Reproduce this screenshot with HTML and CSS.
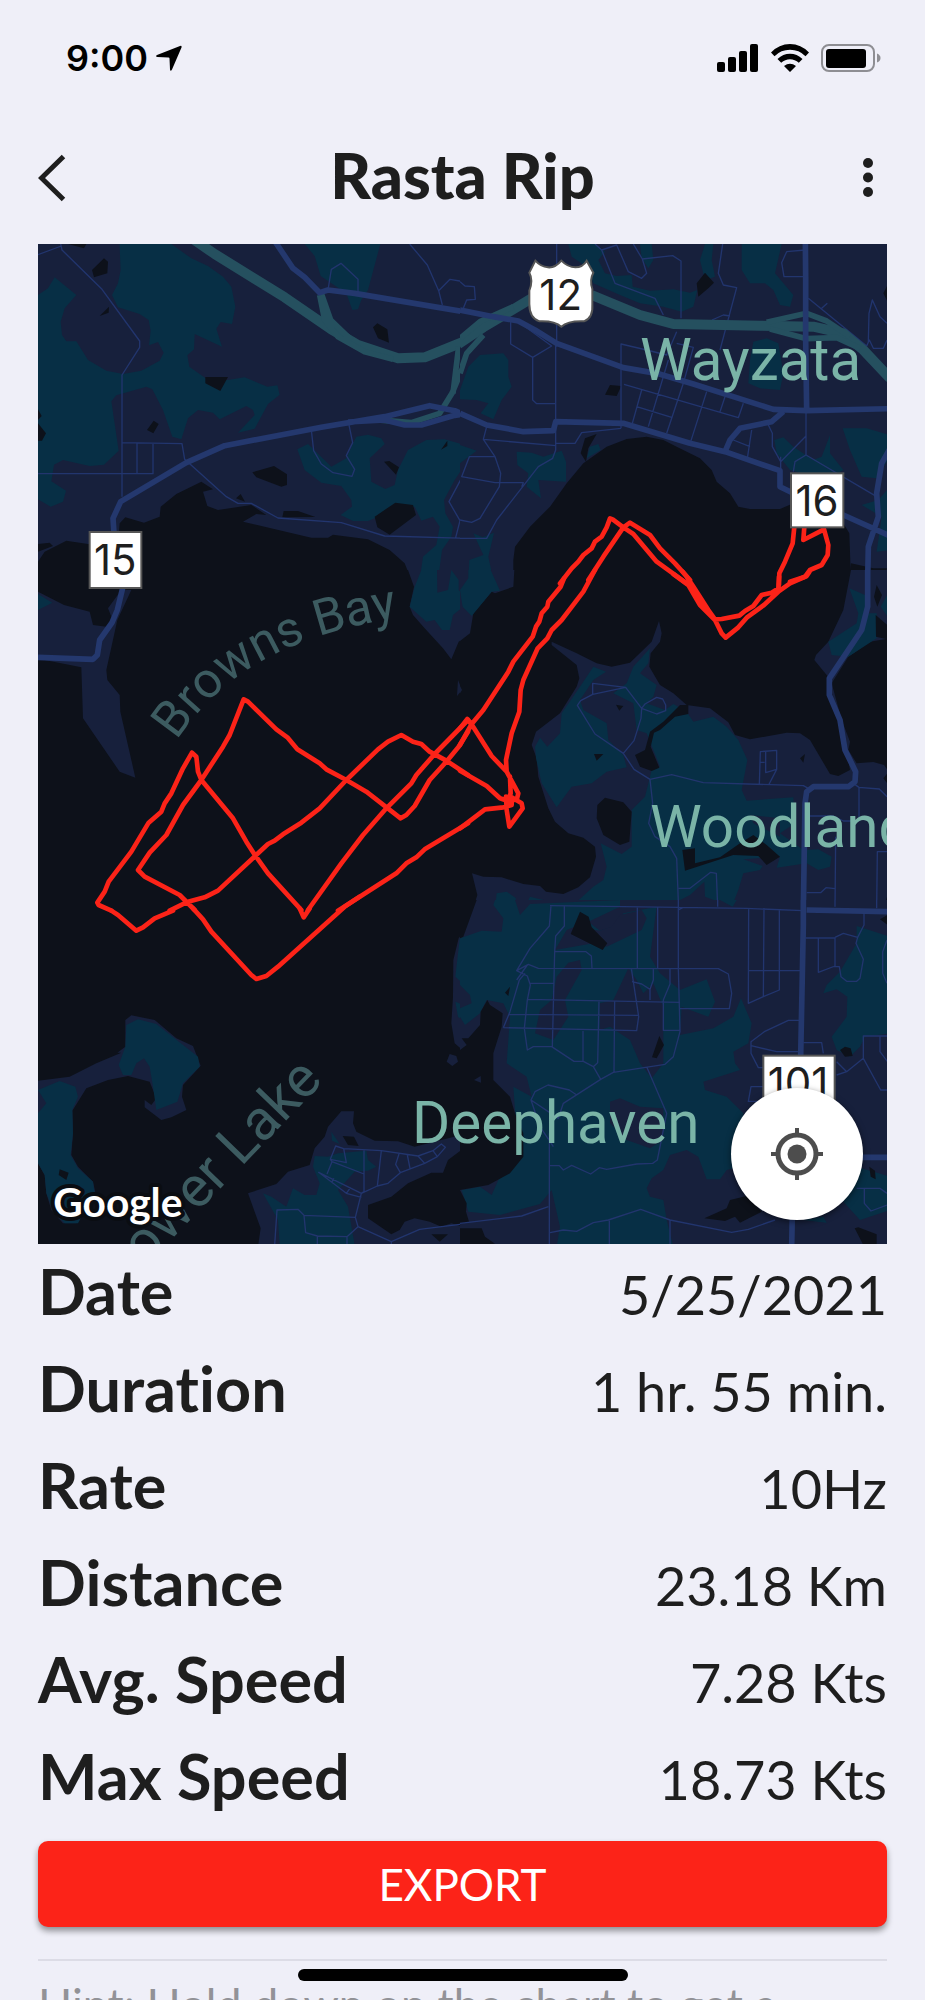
FILE: index.html
```html
<!DOCTYPE html>
<html lang="en">
<head>
<meta charset="utf-8">
<meta name="viewport" content="width=device-width, initial-scale=1">
<title>Rasta Rip</title>
<link rel="stylesheet" href="styles.css">
</head>
<body>
<div class="screen">
  <div class="status">
    <div class="status-side">
      <span class="clock">9:00</span>
      <svg class="icon-arrow" viewBox="0 0 26 26" aria-hidden="true"><path d="M24 1Q26 0 25.500 2.500L16 24.500Q14.500 27 14 24.500L13.500 13.500Q13.500 12.500 12.500 12.500L1.500 12Q-1 11.500 1 10Z"/></svg>
    </div>
    <div class="status-side">
      <svg class="icon-signal" viewBox="0 0 42 28" aria-hidden="true"><rect x="0" y="18" width="8" height="10" rx="2"/><rect x="11" y="13" width="8" height="15" rx="2"/><rect x="22" y="7" width="8" height="21" rx="2"/><rect x="33" y="0" width="8" height="28" rx="2"/></svg>
      <svg class="icon-wifi" viewBox="0 0 38 28" aria-hidden="true"><path d="M0 8.500Q8 0 19 0T38 8.500L34.500 12.200Q28 5.800 19 5.800T3.500 12.200ZM6.500 15Q12 9.700 19 9.700T31.500 15L27.800 18.800Q24 15.300 19 15.300T10.200 18.800ZM13 22Q19 17.500 25 22L19 28Z"/></svg>
      <svg class="icon-battery" viewBox="0 0 60 28" aria-hidden="true"><rect class="battery-shell" x="1" y="1" width="52" height="26" rx="7"/><rect x="5" y="5" width="40" height="19" rx="3"/><path class="battery-tip" d="M56 9.500Q59.500 11 59.500 14T56 18.500Z"/></svg>
    </div>
  </div>

  <header class="topbar">
    <button class="icon-button" type="button" aria-label="Back"><svg class="icon-back" viewBox="0 0 28 48" aria-hidden="true"><path d="M25.500 2.500L3.500 24L25.500 45.500"/></svg></button>
    <h1 class="title">Rasta Rip</h1>
    <button class="icon-button icon-button-end" type="button" aria-label="More"><svg class="icon-more" viewBox="0 0 10 40" aria-hidden="true"><circle cx="5" cy="5" r="5"/><circle cx="5" cy="19.500" r="5"/><circle cx="5" cy="34" r="5"/></svg></button>
  </header>

  <main class="content">
    <div class="map">
      <svg class="map-canvas" viewBox="0 0 2547 3000" role="img" aria-label="Map of the route">
        <rect class="land" width="2547" height="3000"/>

        <svg x="0" y="-12" width="1290" height="1020">
          <g class="park">
            <path d="M0 165L30 145 50 112 115 165 80 205 68 245 72 285 85 304 115 304 150 360 205 392 255 402 310 392 365 362 377 338 360 306 333 316 338 272 332 240 305 222 240 202 222 165 240 130 248 90 244 0 390 0 400 12 460 55 510 78 555 110 580 140 592 200 582 252 548 246 535 266 552 320 470 282 468 328 448 346 454 380 505 416 570 420 620 412 688 440 718 436 725 464 690 492 650 566 600 578 650 525 645 510 625 498 545 538 525 518 480 510 450 535 430 598 403 590 375 510 343 448 325 440 235 466 220 484 242 632 198 674 155 678 75 660 48 674 40 724 84 752 75 785 38 800 0 778Z"/>
            <path d="M800 12H1027L990 150 970 180 960 208 943 210 925 160 848 108 830 48Z"/>
            <path d="M778 628L810 612 880 680 925 655 945 610 955 590 990 584 1030 595 1040 612 995 655 1000 725 1042 747 1070 735 1080 690 1110 630 1165 600 1220 598 1290 618V660L1250 720 1218 780 1222 820 1245 860 1240 890 1212 930 1200 1020H1145L1155 950 1195 915 1205 860 1185 830 1150 842 1130 800 1010 835 990 843 945 843 908 825 942 800 940 780 910 738 850 728 800 690Z"/>
            <path d="M1266 478L1290 410V478ZM1240 990L1270 1020H1235Z"/>
          </g>
          <g class="water">
            <path d="M0 965L20 935 85 902 150 912 240 905 245 850 262 832 318 848 365 830 368 800 415 762 490 725 525 748 495 755 508 798 540 810 640 795 685 825 655 822 615 845 820 893 870 893 885 884 990 898 1055 930 1100 970 1120 1020H0Z"/>
            <path d="M0 912L35 908 45 918 0 935ZM90 12H145L138 25ZM162 90L198 55 210 65 208 100 168 112ZM185 228L213 200 212 218ZM1005 262L1018 250 1048 268 1053 308 1020 295ZM502 411H570L547 453 502 430ZM327 570L347 542 362 552 346 580ZM0 508L11 528 0 540ZM0 550L24 580 12 602H0ZM643 697L708 678 747 703V735L730 740 655 712ZM594 775L608 762 621 785ZM737 813H780L832 831 733 832ZM1010 830L1072 788 1125 795 1134 825 1055 884 1018 862ZM1038 665L1054 663 1083 682 1074 704ZM1209 629L1228 602V618Z"/>
          </g>
          <g class="street">
            <path d="M0 44L70 18M68 12L72 30 192 148 305 303V322L252 405V770M0 701H345V610M297 610V701M252 608L432 611 440 658 565 770 600 790H640L720 834 910 848 1040 888 1290 895M820 570L827 632 850 672 885 698 942 709 950 688 925 647 944 608 933 555M870 150L880 88 909 70 960 118V155M1115 12L1168 75 1202 152 1213 195M1202 152L1236 118 1265 123 1290 140M1279 210L1290 175M1290 655L1273 710 1233 785 1266 842 1253 893M1273 710L1290 713M1266 842L1290 845"/>
          </g>
          <g class="highway">
            <path d="M455 -10L530 42 740 172 880 268 960 315 1080 355 1160 352 1290 300"/>
            <path class="ramp" d="M845 165L860 240 900 290 980 335 1065 358M850 160L878 240 940 300M1290 345L1242 460 1205 520 1120 548 1000 538M1262 320L1245 460"/>
          </g>
          <g class="road"><path d="M708 0L765 85 800 112 845 158 870 150 950 160 1290 217M228 880L225 835 248 785 445 668 560 617 850 562 1040 530 1175 497 1250 512 1290 530M930 546L1040 540 1100 555H1150L1250 526 1290 520"/></g>
        </svg>

        <svg x="1266" y="-12" width="1290" height="1020">
          <rect class="land" width="1290" height="1020"/>
          <g class="park">
            <path d="M325 12H405L435 35 415 60 435 100 470 108 515 105 518 140 570 152 640 148 690 158 712 150 700 200 665 215 610 200 540 190 480 165 400 130 380 80 335 50ZM540 12H575L580 60 565 85 545 55ZM735 12H760L755 60 765 110 735 120 720 60ZM845 12H965L945 100 1000 165 990 200 960 195 940 150 915 130 870 130 845 90ZM60 345L130 340 145 360V410L155 440 125 480 100 538 62 520 85 490 50 480 0 478V450L25 380ZM880 305L920 295 955 310 970 400 960 450 900 445 865 430 870 360ZM170 635L215 638 250 650 305 632 318 665V725L235 720 243 775 200 740 205 700 172 675ZM1148 565L1220 565 1290 585V650L1250 715 1205 710 1170 630ZM943 600L970 592 1000 620 1060 660 1085 650 1110 585V640L1150 690 1100 720 990 690 950 640ZM0 615L50 632 0 670ZM40 880L68 892 102 878 85 950 100 1020H25L28 960 70 945ZM390 620L415 612 422 630 380 655ZM1205 795L1255 780 1290 740V930L1250 935 1265 830Z"/>
          </g>
          <g class="water">
            <path d="M160 960L165 920 210 860 270 800 320 730 370 670 440 620 500 597 560 590 610 600 650 620 720 655 755 690 770 725 810 760 835 800 870 807 960 807 1000 790 1150 850 1168 880 1173 1020H160Z"/>
            <path d="M735 98L762 128 745 145 715 170 710 130ZM450 435L484 438 470 468 435 464ZM1290 120L1270 160 1290 200ZM375 595L410 582 385 625 378 665 362 640ZM1173 970L1240 985 1281 985 1275 1008 1240 990H1170Z"/>
          </g>
          <g class="street">
            <path d="M290 12V320M287 310V630L278 655 235 680 110 840 80 895H0M152 245V312L218 352 275 318 175 245M218 352V480L230 491H285M425 30L470 15 505 95 545 115 560 100 547 57 520 12M405 12L425 30 465 130 585 175 610 225M547 57L638 47 663 63V235M788 12L775 100 790 135 830 143 780 330M1035 30L980 35 965 68 972 110H1036M756 240L790 225 810 228M483 565V312L560 330 620 345 650 275M650 310L700 322 670 430 620 580M492 433L835 533 850 490M545 450L517 550M625 360L565 560M740 455L692 605M530 500L635 532M795 470L780 515M1045 175L1220 318 1228 300 1240 325 1270 325 1281 300M1225 305L1227 220 1237 180 1260 230 1281 250M1085 205L1102 190M80 560L70 598 288 617M70 598L105 650 122 700 118 740 60 835 35 847 0 840M105 650H28L5 710 105 728H190L185 740M483 565L365 578 345 610H287M875 570L862 655M820 600L870 620M925 555L937 580V620L962 665 1038 588V510M1038 588V645L1250 770M1000 695L1005 665 1038 645M962 650V690M0 125L15 138 43 140 46 178 20 180 10 205"/>
          </g>
          <g class="highway">
            <path d="M-5 312L70 262 215 175M395 165L540 225 640 252 900 257 1060 260 1150 280 1210 330 1290 415"/>
            <path class="ramp" d="M0 295L60 245 160 200M0 400L20 340 70 285M920 247L1040 220 1100 243 1170 290M930 267L1040 296 1130 293 1200 325"/>
          </g>
          <g class="road"><path d="M1036 0L1037 110V300L1040 510M0 210L100 230 175 243 225 270 290 310 490 383 590 400 700 432 940 508 1040 512 1290 506M970 515L935 545 840 565 810 600 795 635M0 520L80 555 190 575 280 572 287 545 490 550 690 610 795 635 960 692V740L1000 760 1150 825 1290 888M1290 625L1265 670 1250 760 1255 830 1225 920 1223 1020"/></g>
        </svg>

        <svg x="0" y="978" width="1290" height="1020">
          <rect class="water" width="1290" height="1020"/>
          <path class="land" d="M0 65L78 105 155 125 165 165 205 170 222 145 210 115 250 60H280L238 150 205 300 208 330 245 375 247 425 292 623 245 605 135 445 130 292 20 270H0ZM1110 0H1290V195L1262 215 1240 268 1215 235 1160 175 1125 135 1115 110 1128 50ZM1260 330L1272 360 1257 378Z"/>
          <path class="park" d="M0 72L43 98 0 120ZM1150 0H1197L1198 68 1230 60 1240 0 1262 30V60L1275 75 1290 40V130L1270 115 1245 135 1235 180 1212 180 1190 150 1165 155 1115 110 1130 50Z"/>
          <path class="road" d="M255 50L238 120 222 158 185 210 178 255 165 268 0 262"/>
        </svg>

        <svg x="1266" y="978" width="1290" height="1020">
          <rect class="water" width="1290" height="1020"/>
          <path class="land" d="M0 0H163L160 50 105 70 95 65 40 130 30 190 0 213ZM275 215L350 250 410 280 455 290 510 278 575 215 597 153 605 190 600 215 572 250 568 290 600 345 640 370 680 405 750 415 805 457 825 495 870 508 980 488 1020 490 1050 510 1110 612 1135 618 1170 600 1160 545 1125 420 1108 325 1063 270 1068 255 1105 215 1150 120 1173 0H1290V205L1230 215 1165 260 1115 340 1145 450 1170 515 1165 540 1190 580 1240 576 1272 585 1290 610V1020H38L52 975 36 910 70 920 125 922 190 942 240 948 258 965 310 972 355 952 390 922 408 860 405 830 370 803 325 790 285 755 265 715 235 620 230 565 215 525 228 485 300 430 350 350 358 325 350 285 275 225ZM0 348L6 360 0 370Z"/>
          <g class="park">
            <path d="M25 0H92L120 62 95 65 35 138 8 110 0 60 25 25ZM400 290L438 305 400 330 360 390 370 420 440 460 445 510 490 555 500 592 440 605 395 640 335 650 290 712 245 640 228 565 225 530 240 503 262 530 300 490 305 430 360 350ZM570 235L565 280 540 310 590 345 580 380 560 400 615 420 640 402 680 425 700 455 760 440 800 470 835 510 862 570 845 660 860 692 1000 682 1005 760 960 790 1030 840 1075 838 1115 860 1110 890 1075 900 1040 880 950 893 960 860 850 868 908 888 900 900 850 910 835 960 815 1010 735 980 733 935 690 975 620 1010 340 1005 400 950 430 930 440 890 422 820 485 852 515 830V720L555 680 575 600 600 590 560 490 530 480 520 400 460 370 500 340 520 290ZM1168 55L1215 75V130L1250 130V205L1165 260 1115 255 1105 215 1190 160 1195 130ZM1290 60L1262 110 1290 150ZM110 970L140 965 168 985 160 1020H105ZM210 980L290 1000 300 1020H190Z"/>
          </g>
          <path class="land" d="M870 735L960 745V800L880 760Z"/>
          <g class="water">
            <path d="M435 683L490 697 515 725 508 815 480 825 430 795 410 745 412 705ZM660 405L685 405V432L645 440 600 480 582 488 572 530 598 593 575 603 540 590 525 555 555 540 570 485 610 455ZM667 840L705 835V880L780 862 840 820 880 795 920 825 960 860 920 885 895 858 820 855 675 902ZM468 404L490 408 478 422ZM402 552H430L410 572ZM1035 552L1030 578 1020 565ZM1250 45L1266 75 1252 110 1242 80ZM1247 135L1290 172V210L1248 200ZM1290 600L1270 625 1290 650ZM1281 980L1270 1020H1290Z"/>
          </g>
          <g class="street">
            <path d="M398 373V340L497 352 545 415 543 445 522 512 490 550 405 492 352 406 362 392 398 373 497 352M545 415L555 402 590 382 608 387 617 405V422L590 432 545 415M490 550L522 598 570 628 635 614 730 638 1030 647 1045 655M570 628L578 700 566 760 585 800 630 830 650 865 656 1020M656 955H690L752 907 769 910 773 1010M273 1020V1006L655 1010 1290 1022M313 1006V1020M532 1010V1020M593 1010V1020M898 645L901 545 950 541V598L926 645M950 598L917 608V545M901 577H914M1180 640L1197 652 1258 657 1281 680M1197 652V753M1040 738H1120L1150 753H1197M1040 968H1082L1098 953 1125 956M1125 1015L1127 800M1281 845H1252L1250 1015"/>
          </g>
          <path class="road" d="M1223 0V110L1205 180 1108 325V375L1140 450 1155 540 1187 605 1185 635 1165 650H1060L1040 665 1035 700 1030 1020"/>
        </svg>

        <svg x="0" y="1968" width="1290" height="1040">
          <rect class="water" width="1290" height="1040"/>
          <path class="land" d="M0 542L95 530 175 490 250 458 238 458 262 440V360L280 346 350 360 415 415 465 438 488 497 435 555 432 590 445 630 400 652 370 660 320 622V600L340 615 355 595 335 545 270 528 210 540 145 565 103 632 105 700 100 765 120 800 165 845 175 890 115 970H75L40 930 25 880 20 825 0 790ZM910 634H948L945 670 955 695 1010 722 1080 724 1130 740 1290 700V735L1230 780 1215 818H1180L1110 850 1060 890 990 915V955L1060 1003 1085 990 1100 965 1130 955 1175 965 1210 980 1240 970 1290 985V1040H660L668 985 630 880 715 852 750 815 815 795 830 745 860 710 870 680ZM1290 80L1262 115 1246 180 1245 290 1240 370 1250 430 1270 447 1285 440 1270 420 1290 420ZM1235 462L1255 468 1260 485 1243 498 1226 485Z"/>
          <path class="park" d="M265 375L300 358 355 372 480 470 485 500 435 550 418 605 355 630 345 560 335 500 318 475 295 490 280 525 255 525 242 495 262 440ZM0 570L65 543 112 560 120 590 103 630 105 700 98 765 120 805 165 845 170 880 120 970H80L45 930 25 880 20 825 0 790V640L25 610ZM830 768L870 770 900 760 985 752 990 780 1015 800 990 812 950 815 900 870 930 920 950 1035H725L720 960 675 880 700 890 745 920 765 865 800 885 835 885 845 850 825 800ZM880 695L905 732 882 722ZM1265 118L1290 120V265L1252 230ZM1252 305L1290 320V375L1260 350ZM1275 870H1290V910Z"/>
          <path class="water" d="M65 808L92 818 85 840 62 825ZM914 708L948 710 962 738 930 735ZM1180 1003L1230 1003 1205 1025Z"/>
          <path class="street" d="M710 1035L717 930 780 928 798 946 952 952M798 946L803 998 838 1008 927 1010 960 980 1060 1025 1145 988 1290 970M838 1008V1035M927 1010V1035M960 980L952 952 970 880 1018 858 1050 850 1087 818 1160 790 1198 770 1222 742 1210 732 1185 752 1140 768 1030 752 917 746 893 738 877 778 925 788 917 746M877 778L882 785 867 822M882 785L978 822V750M978 822V875L970 880 842 817 925 880 970 892M880 848L888 835M925 880L938 862M1030 752L1018 858M1083 762L1073 793 1087 818M1108 765L1116 805M1140 768L1160 790M1185 752L1198 770M1060 1025V1035"/>
        </svg>

        <svg x="1266" y="1968" width="1290" height="1040">
          <rect class="land" width="1290" height="1040"/>
          <g class="park">
            <path d="M0 115L65 92 125 95 130 55 100 15 105 0H165L180 45 210 12 480 0 480 20 385 65 420 92 460 80 490 40 590 20 570 170 600 220 660 270 740 238 765 305 745 350 690 330 665 320 660 405 760 385 820 350 843 295 875 370 865 430 820 455 825 490 840 510 730 545 735 570 800 590 850 640 840 800 800 810 780 838H740L715 770 680 750 630 765 610 810 575 835 560 865 570 890 610 900 620 960 640 1040H290L300 980 275 870 240 912 120 945 25 935 5 870 60 860 95 885 115 840 190 760 170 700 160 560 215 590 200 530 140 490 150 350 130 310 80 300 60 340 15 375 0 350ZM1190 78L1290 110V400L1215 410 1200 440 1170 470 1130 450 1115 410 1160 350 1162 290 1130 268 1090 280 1100 255 1140 215 1190 130ZM1150 905L1190 800 1290 830V930L1200 960ZM1030 960L1090 950 1100 968ZM780 0H830L818 20Z"/>
          </g>
          <path class="land" d="M325 188L360 180 365 210 315 300 325 350 280 420 225 400 240 330 275 300 290 230ZM505 205L530 240 550 280 580 250 610 320 610 490 575 535 540 490 510 420 450 380 420 390 420 310 460 300ZM0 255L30 285 35 310 0 325ZM450 605L480 595 540 620 610 625V720L570 745 500 720 450 670ZM480 45L545 30 560 55 545 90 440 140 400 130 285 150 320 90 345 80 420 92 455 80Z"/>
          <g class="water">
            <path d="M82 300L90 315 128 340 125 380 100 460V540L150 590 165 640 190 700V770L150 820 85 855 0 870V450L20 435 5 415 25 415 60 375 62 335ZM0 0H50L10 110 0 115ZM0 870L20 910 18 935 28 968 0 970ZM0 985H65L75 1010 105 1031 0 1040ZM360 35L386 50 395 82 442 130 428 150 332 102ZM135 278L150 260 145 288ZM598 408L612 435 590 475 576 472ZM733 955L800 925 810 900 860 888 905 935 840 968 825 950 795 963ZM1140 450L1155 440 1172 445 1178 468 1155 470ZM1228 800L1245 812 1247 838 1232 830ZM1184 985L1195 982 1250 1003V1035H1210ZM1290 40L1260 58 1290 80Z"/>
            <path class="land" d="M42 540L62 528 63 548Z"/>
          </g>
          <g class="street">
            <path d="M655 0V205L660 395 640 470 615 493 460 517 422 538 310 610 300 640M655 30L670 22M773 0V20M270 17L655 22 860 25 1030 32M273 17L268 78 210 145 170 212 202 228 211 255 202 300 193 385 202 450 220 440H275L342 484H370L400 500 422 538M313 17V78L287 108 284 155 277 440M285 155H378L394 168 396 205M532 20V205M593 22V205M170 212L205 193 235 205 775 206 805 222 815 280 808 326H660M170 240L202 195M130 383L150 335 178 240 195 220M211 250H282M202 298L660 307M148 343L535 346M130 383L530 392 536 350 514 205M516 245L545 252 570 268 580 240 580 205M570 268V300M630 205V252L610 300V391H660M417 302L413 488 400 500M464 302L462 517M369 393V484M560 500L620 640 592 780 578 790 530 792 440 808 418 803 392 822 335 796 310 810 298 797H270M350 585L328 570 264 555 225 575 213 600 295 655 300 640M213 600L240 680 280 740M268 1040V700M0 970L185 948 265 920M270 998L310 990 350 994 400 968 445 960 542 928 630 960 815 997 865 988 945 960M448 962V1035M630 960V1035M866 25L865 310 910 290 958 270V30M912 25L910 290M865 212H1020M1036 114H1125V198L1075 217V115M1125 112L1150 100 1193 112 1188 130 1210 178 1200 235 1190 244H1160L1143 230 1138 200H1120M1193 112L1212 75V42M1125 0V20M1250 0V25M1281 120L1268 155V220L1281 250M1017 361H985L913 395 873 425V460L895 503H910M873 437L950 455 1015 455M1030 428H1085L1090 460M1130 485L1160 515 1210 475V408H1290M1160 515L1130 525M1210 475L1262 570H1290M1260 408V455L1290 495M910 560H873L865 604H910M1190 865H1260L1281 880M1213 867V910L1233 933 1281 915"/>
          </g>
          <path class="road" d="M1030 0V75L1022 470M997 940L995 1040M1040 30L1290 35M1190 772H1290"/>
        </svg>

        <defs>
          <path id="bay-arc" d="M416 1490C525 1325 710 1168 1130 1114"/>
        </defs>
        <text class="water-label bay"><textPath href="#bay-arc">Browns Bay</textPath></text>
        <text class="water-label" text-anchor="end" transform="translate(858 2512) rotate(-46)">Lower Lake</text>

        <g class="route">
          <path transform="translate(1266 -12)" d="M300 1030L335 985 355 965 370 945 395 925 405 905 425 890 440 862 450 835 458 838 490 862 520 882 590 965 680 1030M385 1020L430 950 490 862 510 848 570 885 600 925 645 970 690 1020M1003 860L998 910 975 965 958 1000 957 1035M1033 860L1030 900 1092 868 1105 915 1103 945 1085 975 1050 990 1035 1010 990 1025"/>
          <path transform="translate(1266 978)" d="M312 25L302 50 265 95 262 110 245 130 238 155 228 170 218 200 160 275 145 305 70 420 35 462 0 525M405 0L370 65 305 150 275 180 262 205 233 235 190 330 182 360 178 425 155 490 138 570 140 605 175 670 170 690 135 690 120 685 80 648 0 602M0 475L22 447 38 468 95 558 140 605M138 680L140 720 148 770 188 715 185 700 155 682 155 705 130 712 75 718 0 775M150 620L152 670 140 700M640 12L685 45 720 105 765 150 785 190 797 203 835 172 860 143 912 105 955 65 990 40 1040 18 1048 6M668 5L680 20 700 50 745 120 765 148 785 147 838 137 855 123 880 108 905 75 935 68 955 55 957 20"/>
          <path transform="translate(0 978)" d="M462 548L475 560 480 605 490 630 585 745 625 815 652 857 690 910 790 1020M462 548L435 595 400 670 380 700 370 725 332 758 280 845 212 935 200 965 178 998 182 1005 220 1022M617 388L630 395 715 478 748 502 778 538 845 580 865 598 925 630 985 665 1088 745 1105 735 1130 708 1175 630 1225 575 1262 530 1290 485M617 388L575 495 555 530 490 630 435 705 385 795 335 848 300 900 320 920 425 975 470 1020M395 1022L450 995 500 982 540 962 690 822 710 812 735 793 790 758 845 715 925 630 1020 538 1050 515 1090 495 1125 515 1150 522 1175 545 1225 572 1290 615M810 1020L910 880 975 795 1045 715 1120 640 1135 615 1190 552 1290 450M900 1022L1075 910 1105 880 1135 862 1160 838 1290 760"/>
          <path transform="translate(0 1968)" d="M220 32L240 45 295 92 315 82 350 55 405 32M465 25L495 58 520 95 640 225 655 237 685 228 720 200 920 20 965 -10M785 25L797 52 815 25"/>
        </g>

        <g class="place-label">
          <text x="1806" y="408">Wayzata</text>
          <text x="1836" y="1808">Woodland</text>
          <text x="1122" y="2697">Deephaven</text>
        </g>
        <g class="shield">
          <path d="M1492 50Q1508 68 1530 70T1570 50Q1590 70 1612 70T1646 50L1666 86Q1654 108 1663 135V180Q1666 222 1638 232Q1590 230 1570 248Q1550 230 1504 232Q1474 222 1474 180V140Q1486 108 1474 86Z"/>
          <rect x="155" y="864" width="155" height="168"/>
          <rect x="2259" y="688" width="157" height="162"/>
          <rect x="2176" y="2435" width="214" height="176"/>
        </g>
        <g class="shield-text">
          <text x="1568" y="198">12</text>
          <text x="232" y="992">15</text>
          <text x="2337" y="815">16</text>
          <text x="2280" y="2562">101</text>
        </g>
        <text class="brand" x="46" y="2918">Google</text>
      </svg>
      <button class="locate" type="button" aria-label="Center on my location">
        <svg class="icon-locate" viewBox="0 0 52 52" aria-hidden="true"><circle class="locate-ring" cx="26" cy="26" r="19"/><circle cx="26" cy="26" r="9.500"/><path d="M24 0H28V8H24ZM24 44H28V52H24ZM0 24H8V28H0ZM44 24H52V28H44Z"/></svg>
      </button>
    </div>

    <dl class="stats">
      <div class="row"><dt>Date</dt><dd>5/25/2021</dd></div>
      <div class="row"><dt>Duration</dt><dd>1 hr. 55 min.</dd></div>
      <div class="row"><dt>Rate</dt><dd>10Hz</dd></div>
      <div class="row"><dt>Distance</dt><dd>23.18 Km</dd></div>
      <div class="row"><dt>Avg. Speed</dt><dd>7.28 Kts</dd></div>
      <div class="row"><dt>Max Speed</dt><dd>18.73 Kts</dd></div>
    </dl>

    <button class="export" type="button">EXPORT</button>
    <p class="hint">Hint: Hold down on the chart to get a</p>
  </main>
  <div class="home-indicator"></div>
</div>
</body>
</html>
```

FILE: styles.css
```css
* { box-sizing: border-box; }

body {
  margin: 0;
  background: #efeff8;
  color: #1e1e1e;
  font-family: Lato, "Open Sans", sans-serif;
  font-variant-ligatures: none;
}

button {
  border: 0;
  padding: 0;
  color: inherit;
  font: inherit;
  cursor: pointer;
}

.screen {
  position: relative;
  height: 100vh;
  overflow: hidden;
}

.status {
  display: flex;
  justify-content: space-between;
  align-items: center;
  height: 116px;
  padding: 0 44px 0 66px;
  color: #000;
}

.status-side {
  display: flex;
  align-items: center;
  gap: 12px;
}

.clock {
  font: 600 36px/1 Inter, sans-serif;
}

.status svg { fill: currentColor; }
.icon-arrow { width: 26px; height: 26px; margin-left: -4px; }
.icon-signal { width: 42px; height: 28px; }
.icon-wifi { width: 38px; height: 28px; }
.icon-battery { width: 60px; height: 28px; }
.icon-battery .battery-shell { fill: none; stroke: #8e8e93; stroke-width: 2; }
.icon-battery .battery-tip { fill: #8e8e93; }

.topbar {
  display: flex;
  align-items: center;
  justify-content: space-between;
  height: 128px;
  padding: 0 38px 4px;
}

.title {
  margin: 0;
  padding-bottom: 6px;
  font-size: 63px;
  line-height: 72px;
  font-weight: 900;
}

.icon-button {
  display: flex;
  width: 56px;
  height: 56px;
  align-items: center;
  background: none;
}

.icon-button-end {
  justify-content: flex-end;
  padding-right: 14px;
}

.icon-back {
  width: 28px;
  height: 48px;
  fill: none;
  stroke: currentColor;
  stroke-width: 5;
}

.icon-more { width: 10px; height: 40px; fill: currentColor; }

.content { padding: 0 38px; }

.map { position: relative; }

.map-canvas {
  display: block;
  width: 100%;
  height: auto;
  overflow: hidden;
}

.land { fill: #17203c; }
.water { fill: #0d111a; }
.park { fill: #072f45; }

.street,
.road,
.highway,
.route {
  fill: none;
  stroke-linejoin: round;
}

.street { stroke: #22356e; stroke-width: 4; }
.road { stroke: #24386e; stroke-width: 17; }
.highway { stroke: #25505f; stroke-width: 30; }
.ramp { stroke-width: 17; }
.route { stroke: #fc2318; stroke-width: 14; stroke-linecap: round; }

.place-label { fill: #7ab4a7; font: 400 175px Roboto, sans-serif; }
.water-label { fill: #3c5b60; font: 400 170px Roboto, sans-serif; }
.bay { font-size: 150px; }

.shield { fill: #fff; stroke: #565656; stroke-width: 6; }
.shield-text {
  fill: #1e1e1e;
  font: 400 126px Inter, sans-serif;
  text-anchor: middle;
}

.brand {
  fill: #fff;
  stroke: #0a0d12;
  stroke-width: 24;
  stroke-linejoin: round;
  paint-order: stroke;
  font: 700 122px Lato, sans-serif;
}

.locate {
  position: absolute;
  right: 24px;
  bottom: 24px;
  display: grid;
  place-items: center;
  width: 132px;
  height: 132px;
  border-radius: 50%;
  background: #fff;
  box-shadow: 0 2px 6px rgba(0, 0, 0, 0.5);
}

.icon-locate { width: 52px; height: 52px; fill: #4d4d4d; }
.locate-ring { fill: none; stroke: #4d4d4d; stroke-width: 5; }

.stats { margin: 0; }

.row {
  display: flex;
  justify-content: space-between;
  align-items: baseline;
  height: 97px;
  line-height: 94px;
}

.row dt { font-size: 63px; font-weight: 700; }
.row dd { margin: 0; font-size: 54px; }

.export {
  display: block;
  width: 100%;
  height: 86px;
  margin-top: 15px;
  border-radius: 10px;
  background: #fc2318;
  box-shadow: 0 4px 6px rgba(0, 0, 0, 0.4);
  color: #fff;
  font-size: 44px;
}

.hint {
  margin: 32px 0 0;
  padding-top: 15px;
  border-top: 2px solid #dcdce6;
  color: #929297;
  font-size: 45px;
  line-height: 56px;
  white-space: nowrap;
}

.home-indicator {
  position: absolute;
  left: 50%;
  bottom: 19px;
  width: 330px;
  height: 12px;
  margin-left: -165px;
  border-radius: 6px;
  background: #000;
}
```
